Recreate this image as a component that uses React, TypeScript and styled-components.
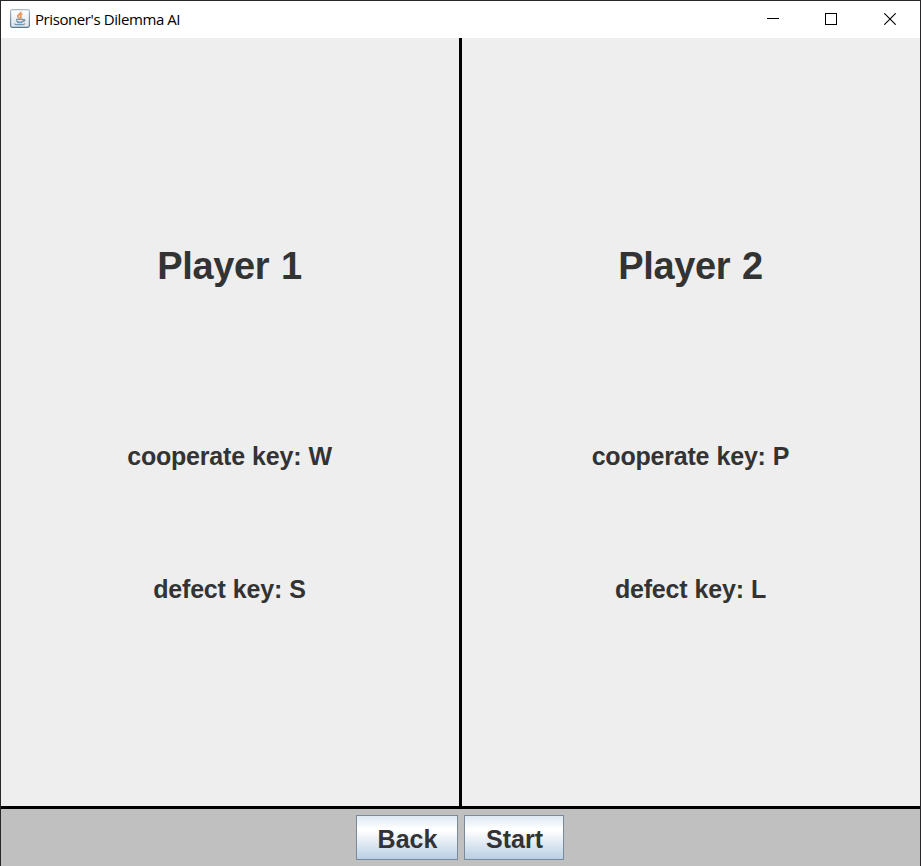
import React from "react";
import styled, { createGlobalStyle } from "styled-components";

const GlobalStyle = createGlobalStyle`
  * { box-sizing: border-box; }
  body { margin: 0; background: #ffffff; overflow: hidden; }
`;

const Window = styled.div`
  width: 921px;
  height: 866px;
  display: flex;
  flex-direction: column;
  border: 1px solid #29262a;
  border-bottom: 0;
  background: #ffffff;
  font-family: "Liberation Sans", Arial, sans-serif;
  color: #333333;
`;

const TitleBar = styled.header`
  height: 37px;
  flex: none;
  display: flex;
  align-items: flex-start;
  padding: 8px 1px 0 9px;
  background: #ffffff;
`;

const Title = styled.span`
  flex: 1;
  margin-left: 5px;
  font: 15px/20px "Open Sans", sans-serif;
  letter-spacing: -0.41px;
  color: #000000;
`;

const Controls = styled.div`
  display: flex;
  height: 20px;
`;

const ControlButton = styled.button`
  width: 58.5px;
  padding: 0;
  border: 0;
  background: none;
  display: flex;
  align-items: center;
  justify-content: center;
`;

const Players = styled.main`
  height: 768px;
  flex: none;
  display: grid;
  grid-template-columns: 458px 458px;
  column-gap: 3px;
  background: #000000;
`;

const PlayerPanel = styled.section`
  display: flex;
  flex-direction: column;
  align-items: center;
  padding: 205px 1px 0 0;
  background: #eeeeee;
`;

const PlayerName = styled.h1`
  margin: 0 0 152px;
  font-size: 38px;
  line-height: 46px;
  font-weight: bold;
  letter-spacing: -0.35px;
  word-spacing: 1.5px;
  white-space: nowrap;
`;

const KeyHint = styled.p`
  margin: 0 0 103px;
  font-size: 25px;
  line-height: 30px;
  font-weight: bold;
  letter-spacing: -0.2px;
  word-spacing: 0.4px;
  white-space: nowrap;
`;

const Footer = styled.footer`
  flex: 1;
  display: flex;
  justify-content: center;
  align-items: flex-start;
  gap: 6px;
  padding: 6px 2px 0 0;
  border-top: 3px solid #000000;
  background: #c0c0c0;
`;

const MetalButton = styled.button<{ $width: number }>`
  width: ${(p) => p.$width}px;
  height: 45px;
  padding: 3px 0 0 2px;
  border: 1px solid #7a8a99;
  border-radius: 0;
  background: linear-gradient(#dde8f3 0%, #ffffff 30%, #ffffff 34%, #b8cfe5 100%);
  font: bold 25px/30px "Liberation Sans", Arial, sans-serif;
  color: #333333;
`;

const JavaIcon = () => (
  <svg width="20" height="19" viewBox="0 0 20 19">
    <defs>
      <linearGradient id="tile" x1="0" y1="0" x2="0" y2="1">
        <stop offset="0" stopColor="#ffffff" />
        <stop offset="1" stopColor="#dce3e8" />
      </linearGradient>
      <linearGradient id="edge" x1="0" y1="0" x2="0" y2="1">
        <stop offset="0" stopColor="#a9bac8" />
        <stop offset="1" stopColor="#587890" />
      </linearGradient>
    </defs>
    <rect x="0.6" y="0.6" width="18.8" height="17.8" rx="1.8" fill="url(#tile)" stroke="url(#edge)" strokeWidth="1.2" />
    <path d="M10.8 2.7C11.4 5.1 7 5.8 7.8 7.5C8.1 8.4 9.2 9 9.5 9.6M12.3 4.9C9.8 6 10.2 7.1 10.9 7.8C11.3 8.4 10.9 9.2 10.4 9.6" fill="none" stroke="#ec8d49" strokeWidth="1.6" />
    <path d="M6 10.4h7.2M6.4 11.3c0 2.4 6.6 2.4 6.7 0M13.2 10.7c2.2-.7 2.2 1.6-.2 1.9M7.2 13.6h5.2M4.5 14.5c0 1.6 9.5 1.6 10.4 0" fill="none" stroke="#7896ac" strokeWidth="1.3" />
  </svg>
);

const players = [
  { name: "Player 1", cooperate: "W", defect: "S" },
  { name: "Player 2", cooperate: "P", defect: "L" },
];

export default function App() {
  return (
    <>
      <GlobalStyle />
      <Window>
        <TitleBar>
          <JavaIcon />
          <Title>Prisoner's Dilemma AI</Title>
          <Controls>
            <ControlButton aria-label="Minimize">
              <svg width="12" height="12" shapeRendering="crispEdges"><path d="M0 5.5h12" stroke="#000" /></svg>
            </ControlButton>
            <ControlButton aria-label="Maximize">
              <svg width="12" height="12" shapeRendering="crispEdges"><rect x=".5" y=".5" width="11" height="11" fill="none" stroke="#000" /></svg>
            </ControlButton>
            <ControlButton aria-label="Close">
              <svg width="12" height="12"><path d="M.3 .3l11.4 11.4M11.7 .3L.3 11.7" stroke="#000" strokeWidth="1.1" /></svg>
            </ControlButton>
          </Controls>
        </TitleBar>
        <Players>
          {players.map((p) => (
            <PlayerPanel key={p.name}>
              <PlayerName>{p.name}</PlayerName>
              <KeyHint>cooperate key: {p.cooperate}</KeyHint>
              <KeyHint>defect key: {p.defect}</KeyHint>
            </PlayerPanel>
          ))}
        </Players>
        <Footer>
          <MetalButton $width={102}>Back</MetalButton>
          <MetalButton $width={100}>Start</MetalButton>
        </Footer>
      </Window>
    </>
  );
}
